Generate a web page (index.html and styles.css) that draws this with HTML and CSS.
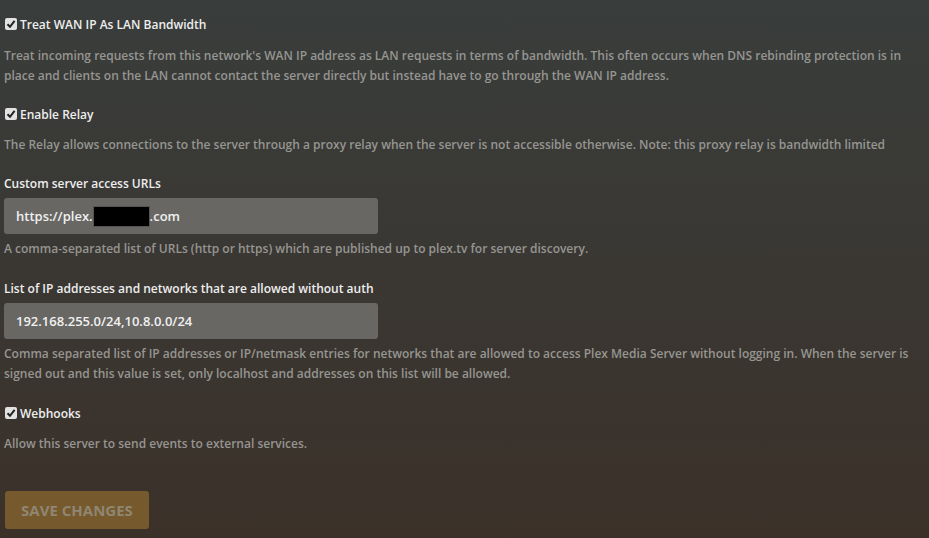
FILE: index.html
```html
<!DOCTYPE html>
<html>
<head>
<meta charset="utf-8">
<title>Network settings</title>
<link rel="stylesheet" href="styles.css">
</head>
<body>

<div class="settings">
	<!-- WAN IP 带宽 -->
	<div class="group">
		<label class="check_label"><span class="check"><svg viewBox="0 0 12 12" width="12" height="12"><path d="M2.5 6.2 L5 8.8 L9.6 2.8" fill="none" stroke="#222" stroke-width="2"/></svg></span>Treat WAN IP As LAN Bandwidth</label>
		<p class="help help_first">Treat incoming requests from this network's WAN IP address as LAN requests in terms of bandwidth. This often occurs when DNS rebinding protection is in place and clients on the LAN cannot contact the server directly but instead have to go through the WAN IP address.</p>
	</div>

	<!-- 中继 -->
	<div class="group">
		<label class="check_label"><span class="check"><svg viewBox="0 0 12 12" width="12" height="12"><path d="M2.5 6.2 L5 8.8 L9.6 2.8" fill="none" stroke="#222" stroke-width="2"/></svg></span>Enable Relay</label>
		<p class="help">The Relay allows connections to the server through a proxy relay when the server is not accessible otherwise. Note: this proxy relay is bandwidth limited</p>
	</div>

	<!-- 自定义地址 -->
	<div class="group group_wide">
		<label class="field_label">Custom server access URLs</label>
		<div class="input">https://plex.<span class="redact"></span>.com</div>
		<p class="help help_tight">A comma-separated list of URLs (http or https) which are published up to plex.tv for server discovery.</p>
	</div>

	<!-- 免认证网络 -->
	<div class="group group_wide">
		<label class="field_label">List of IP addresses and networks that are allowed without auth</label>
		<div class="input">192.168.255.0/24,10.8.0.0/24</div>
		<p class="help help_tight">Comma separated list of IP addresses or IP/netmask entries for networks that are allowed to access Plex Media Server without logging in. When the server is signed out and this value is set, only localhost and addresses on this list will be allowed.</p>
	</div>

	<!-- Webhooks -->
	<div class="group">
		<label class="check_label"><span class="check"><svg viewBox="0 0 12 12" width="12" height="12"><path d="M2.5 6.2 L5 8.8 L9.6 2.8" fill="none" stroke="#222" stroke-width="2"/></svg></span>Webhooks</label>
		<p class="help">Allow this server to send events to external services.</p>
	</div>

	<button class="save" disabled>Save Changes</button>
</div>

</body>
</html>
```

FILE: styles.css
```css
	html, body {
		margin: 0;
		height: 100%;
	}
	body {
		font-family: "Open Sans", "Liberation Sans", sans-serif;
		font-size: 12px;
		font-weight: 600;
		background: linear-gradient(to bottom, #393d3b 0%, #3a3834 45%, #3b3129 100%);
		overflow: hidden;
	}

	.settings {
		padding: 15px 4px 0 4px;
	}

	.group {
		margin-bottom: 19px;
	}
	.group_wide {
		margin-bottom: 20px;
	}

	.check_label, .field_label {
		display: flex;
		align-items: center;
		height: 20px;
		line-height: 20px;
		color: #eee;
		font-size: 12px;
	}
	.check {
		display: inline-flex;
		width: 12px;
		height: 12px;
		margin: 0 3px 2px 1px;
		background-color: #e2e2e2;
		border-radius: 2px;
	}

	.help {
		margin: 10px 0 0 0;
		line-height: 20px;
		color: #969591;
		font-size: 12px;
	}
	.help_first {
		margin-top: 11px;
	}
	.help_tight {
		margin-top: 5px;
	}

	.input {
		display: flex;
		align-items: center;
		box-sizing: border-box;
		width: 374px;
		height: 36px;
		margin-top: 4px;
		padding-left: 12px;
		background-color: #686764;
		border-radius: 3px;
		color: #f0f0f0;
		font-size: 13px;
	}
	.redact {
		display: inline-block;
		width: 57px;
		height: 21px;
		background-color: #000;
		border: 1px solid #555;
		box-sizing: border-box;
	}

	.save {
		margin: 18px 0 0 1px;
		width: 144px;
		height: 38px;
		padding: 0;
		border: none;
		border-radius: 3px;
		background-color: #76592c;
		color: #8f8673;
		font-family: "Open Sans", "Liberation Sans", sans-serif;
		font-size: 15px;
		font-weight: 700;
		text-transform: uppercase;
	}
```
